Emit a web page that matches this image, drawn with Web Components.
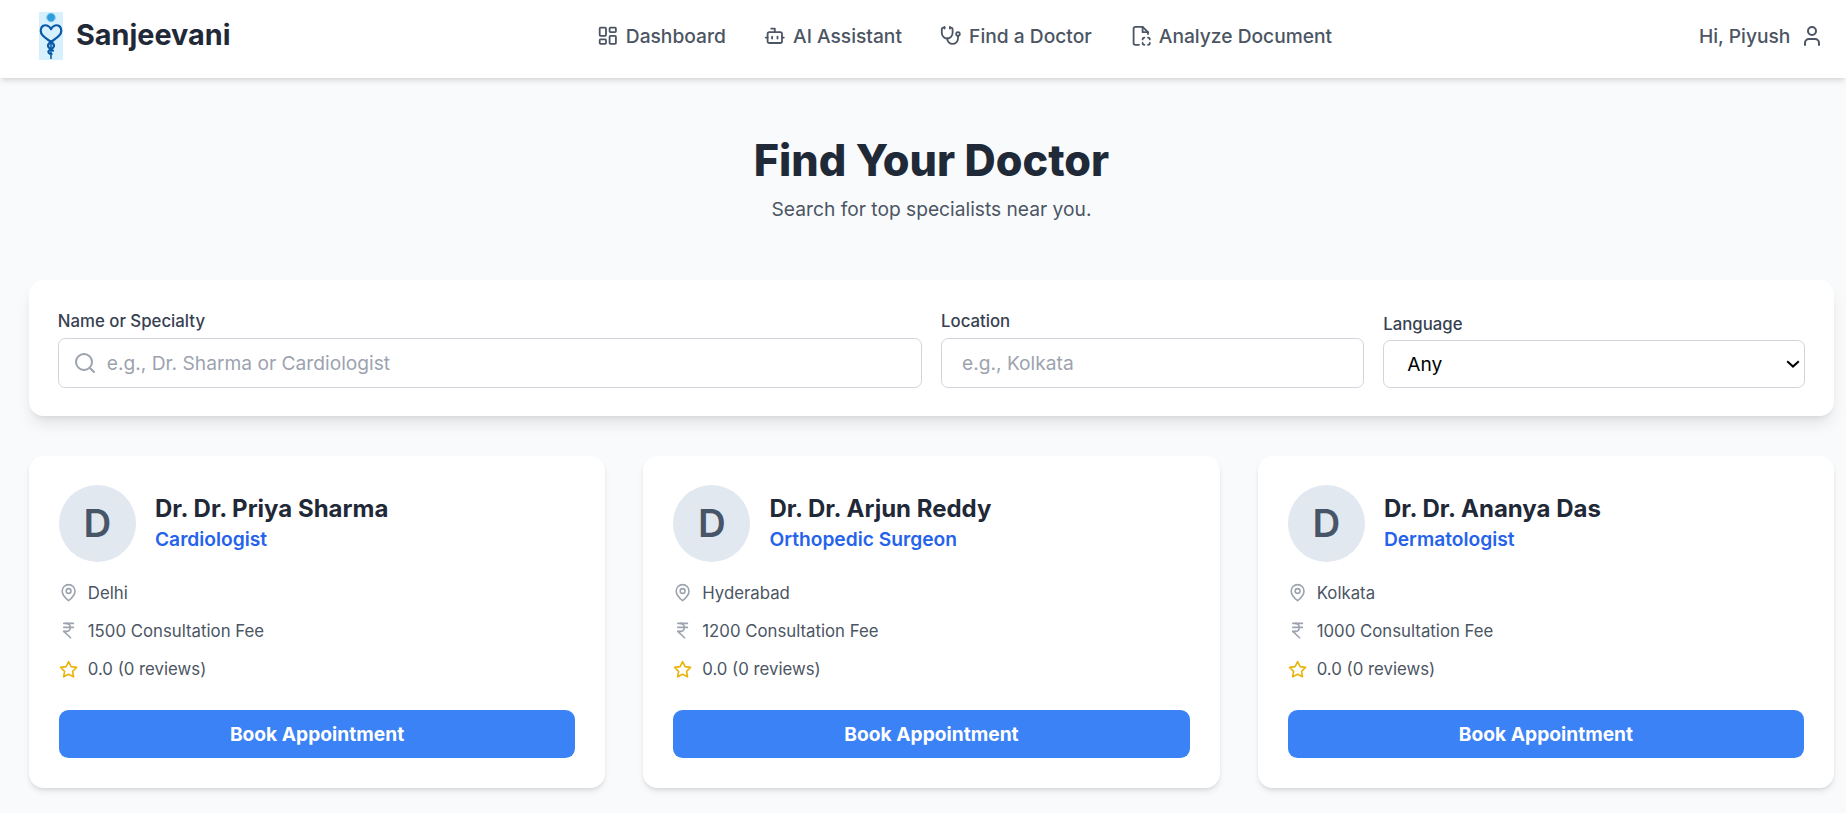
<!DOCTYPE html>
<html lang="en">
<head>
<meta charset="utf-8">
<title>Sanjeevani</title>
<style>
  html, body { margin: 0; padding: 0; background: #f9fafb; overflow: hidden; }
  body { font-family: Inter, "Noto Sans", sans-serif; color: #1f2937; }
</style>
</head>
<body>
<app-shell>
  <top-nav slot="nav"></top-nav>
  <page-heading title="Find Your Doctor" sub="Search for top specialists near you."></page-heading>
  <search-panel></search-panel>
  <card-grid>
    <doctor-card name="Dr. Dr. Priya Sharma" specialty="Cardiologist" city="Delhi" fee="1500"></doctor-card>
    <doctor-card name="Dr. Dr. Arjun Reddy" specialty="Orthopedic Surgeon" city="Hyderabad" fee="1200"></doctor-card>
    <doctor-card name="Dr. Dr. Ananya Das" specialty="Dermatologist" city="Kolkata" fee="1000"></doctor-card>
  </card-grid>
</app-shell>

<script>
  const icon = (inner, size, color, sw) => `<svg width="${size}" height="${size}" viewBox="0 0 24 24" fill="none" stroke="${color}" stroke-width="${sw || 2}" stroke-linecap="round" stroke-linejoin="round" style="display:block;flex:none">${inner}</svg>`;

  const ICONS = {
    dashboard: '<rect width="7" height="9" x="3" y="3" rx="1"/><rect width="7" height="5" x="14" y="3" rx="1"/><rect width="7" height="9" x="14" y="12" rx="1"/><rect width="7" height="5" x="3" y="16" rx="1"/>',
    bot: '<path d="M12 8V4H8"/><rect width="16" height="12" x="4" y="8" rx="2"/><path d="M2 14h2"/><path d="M20 14h2"/><path d="M15 13v2"/><path d="M9 13v2"/>',
    stethoscope: '<path d="M11 2v2"/><path d="M5 2v2"/><path d="M5 3H4a2 2 0 0 0-2 2v4a6 6 0 0 0 12 0V5a2 2 0 0 0-2-2h-1"/><path d="M8 15a6 6 0 0 0 12 0v-3"/><circle cx="20" cy="10" r="2"/>',
    filescan: '<path d="M20 10V8L14 2H6a2 2 0 0 0-2 2v16a2 2 0 0 0 2 2h4"/><path d="M14 2v6h6"/><path d="M16 14a2 2 0 0 0-2 2"/><path d="M20 14a2 2 0 0 1 2 2"/><path d="M20 22a2 2 0 0 0 2-2"/><path d="M16 22a2 2 0 0 1-2-2"/>',
    user: '<path d="M19 21v-2a4 4 0 0 0-4-4H9a4 4 0 0 0-4 4v2"/><circle cx="12" cy="7" r="4"/>',
    search: '<circle cx="11" cy="11" r="8"/><path d="m21 21-4.3-4.3"/>',
    pin: '<path d="M20 10c0 6-8 12-8 12s-8-6-8-12a8 8 0 0 1 16 0Z"/><circle cx="12" cy="10" r="3"/>',
    rupee: '<path d="M6 3h12"/><path d="M6 8h12"/><path d="m6 13 8.5 8"/><path d="M6 13h3"/><path d="M9 13c6.667 0 6.667-10 0-10"/>',
    star: '<polygon points="12 2 15.09 8.26 22 9.27 17 14.14 18.18 21.02 12 17.77 5.82 21.02 7 14.14 2 9.27 8.91 8.26 12 2"/>'
  };

  class AppShell extends HTMLElement {
    constructor() {
      super();
      this.attachShadow({ mode: "open" });
      this.shadowRoot.innerHTML = `
        <style>
          :host { display: block; min-height: 813px; background: #f9fafb; }
          main { padding: 0 12px 0 29px; display: flex; flex-direction: column; }
        </style>
        <slot name="nav"></slot>
        <main><slot></slot></main>
      `;
    }
  }

  class TopNav extends HTMLElement {
    constructor() {
      super();
      this.attachShadow({ mode: "open" });
      const links = [
        ["dashboard", "Dashboard"],
        ["bot", "AI Assistant"],
        ["stethoscope", "Find a Doctor"],
        ["filescan", "Analyze Document"]
      ];
      this.shadowRoot.innerHTML = `
        <style>
          :host { display: block; background: #fff; box-shadow: 0 4px 6px -1px rgba(0,0,0,.1), 0 2px 4px -2px rgba(0,0,0,.1); position: relative; }
          nav { height: 78px; box-sizing: border-box; display: grid; grid-template-columns: 558px auto 1fr; align-items: center; padding: 0 22px 7px 39px; }
          .brand { display: flex; align-items: center; gap: 13px; }
          .brand b { font-size: 28.8px; font-weight: 700; color: #1f2937; line-height: 1; }
          .links { display: flex; gap: 38.4px; }
          a { display: flex; align-items: center; gap: 7.2px; font-size: 19.2px; font-weight: 500; color: #4b5563; text-decoration: none; }
          .me { display: flex; align-items: center; justify-content: flex-end; gap: 9.6px; font-size: 19.2px; font-weight: 500; color: #4b5563; }
        </style>
        <nav>
          <div class="brand">
            <svg width="24" height="48" viewBox="0 0 24 48" style="display:block;flex:none">
              <rect width="24" height="48" fill="#d6f1fd"/>
              <circle cx="12" cy="5.5" r="4.2" fill="#2f9ddc" stroke="#6fc0ea" stroke-width="1"/>
              <path d="M12 17C10 13 6 12.6 3.8 14C1 16 1 20.6 3.8 23.6C7 27 11 28.6 14 31.6C16.6 34.4 13.6 36.6 10 38.6C8.4 40 10 42 12.6 42" fill="none" stroke="#0a5aa8" stroke-width="2.2" stroke-linecap="round"/>
              <path d="M12 17C14 13 18 12.6 20.2 14C23 16 23 20.6 20.2 23.6C17 27 13 28.6 10 31.6C7.4 34.4 10.4 36.6 14 38.6" fill="none" stroke="#0a5aa8" stroke-width="2.2" stroke-linecap="round"/>
              <path d="M12 28V47" stroke="#0a5aa8" stroke-width="1.6"/>
            </svg>
            <b>Sanjeevani</b>
          </div>
          <div class="links">
            ${links.map(([i, t]) => `<a href="#">${icon(ICONS[i], 21.6, "#4b5563")}<span>${t}</span></a>`).join("")}
          </div>
          <div class="me"><span>Hi, Piyush</span>${icon(ICONS.user, 24, "#4b5563")}</div>
        </nav>
      `;
    }
  }

  class PageHeading extends HTMLElement {
    constructor() {
      super();
      this.attachShadow({ mode: "open" });
      this.shadowRoot.innerHTML = `
        <style>
          :host { display: block; text-align: center; padding-top: 54.5px; margin-bottom: 57.5px; }
          h1 { margin: 0; font-size: 43.2px; line-height: 55px; font-weight: 800; color: #1f2937; }
          p { margin: 7px 0 0; font-size: 19.2px; line-height: 28px; color: #4b5563; }
        </style>
        <h1>${this.getAttribute("title")}</h1>
        <p>${this.getAttribute("sub")}</p>
      `;
    }
  }

  class SearchPanel extends HTMLElement {
    constructor() {
      super();
      this.attachShadow({ mode: "open" });
      this.shadowRoot.innerHTML = `
        <style>
          :host { display: block; background: #fff; border-radius: 14.4px; box-shadow: 0 10px 15px -3px rgba(0,0,0,.1), 0 4px 6px -4px rgba(0,0,0,.1); margin-bottom: 40px; }
          .row { height: 136px; box-sizing: border-box; padding: 28.8px 28.8px 0; display: grid; grid-template-columns: 862fr 422fr 421fr; column-gap: 19.2px; align-items: start; }
          label { display: block; font-size: 16.8px; line-height: 24px; font-weight: 500; color: #374151; margin-bottom: 5px; }
          .box { height: 50px; box-sizing: border-box; border: 1px solid #d1d5db; border-radius: 7.2px; display: flex; align-items: center; padding-left: 14px; gap: 10px; background: #fff; }
          .box.plain { padding-left: 20px; }
          input { border: 0; outline: 0; padding: 0; flex: 1; min-width: 0; font: 400 19.2px Inter, sans-serif; color: #1f2937; background: transparent; }
          input::placeholder { color: #9ca3af; opacity: 1; }
          .lang { padding-top: 3px; }
          .lang label { margin-bottom: 4px; }
          .pick { position: relative; }
          .pick svg { position: absolute; right: 5px; top: 20px; pointer-events: none; }
          select { display: block; width: 100%; height: 48px; box-sizing: border-box; border: 1px solid #d1d5db; border-radius: 7.2px; background: #fff; padding: 0 19.2px 0 23px; font: 400 19.2px Inter, sans-serif; color: #000; appearance: none; }
        </style>
        <div class="row">
          <div>
            <label>Name or Specialty</label>
            <div class="box">${icon(ICONS.search, 24, "#9ca3af")}<input placeholder="e.g., Dr. Sharma or Cardiologist"></div>
          </div>
          <div>
            <label>Location</label>
            <div class="box plain"><input placeholder="e.g., Kolkata"></div>
          </div>
          <div class="lang">
            <label>Language</label>
            <div class="pick">
              <select><option>Any</option></select>
              <svg width="14" height="8" viewBox="0 0 14 8" fill="none" stroke="#000" stroke-width="2"><path d="M1.2 1.2 7 6.6 12.8 1.2"/></svg>
            </div>
          </div>
        </div>
      `;
    }
  }

  class CardGrid extends HTMLElement {
    constructor() {
      super();
      this.attachShadow({ mode: "open" });
      this.shadowRoot.innerHTML = `
        <style>
          :host { display: grid; grid-template-columns: repeat(3, 1fr); column-gap: 38.4px; }
        </style>
        <slot></slot>
      `;
    }
  }

  class DoctorCard extends HTMLElement {
    constructor() {
      super();
      this.attachShadow({ mode: "open" });
      const name = this.getAttribute("name");
      this.shadowRoot.innerHTML = `
        <style>
          :host { display: block; background: #fff; border-radius: 14.4px; box-shadow: 0 4px 6px -1px rgba(0,0,0,.1), 0 2px 4px -2px rgba(0,0,0,.1); padding: 28.8px 30px 30px; box-sizing: border-box; }
          .head { display: flex; align-items: center; gap: 19.2px; }
          .avatar { width: 76.8px; height: 76.8px; border-radius: 50%; background: #e2e8f0; color: #475569; font-size: 38.4px; font-weight: 600; display: flex; align-items: center; justify-content: center; flex: none; }
          .who { padding-bottom: 2px; }
          h3 { margin: 0; font-size: 24px; line-height: 33px; font-weight: 700; color: #1f2937; }
          .spec { font-size: 19.2px; line-height: 28px; font-weight: 600; color: #2563eb; }
          ul { list-style: none; margin: 19px 0 0; padding: 0; display: flex; flex-direction: column; gap: 14.4px; }
          li { display: flex; align-items: center; gap: 9.6px; font-size: 16.8px; line-height: 24px; color: #4b5563; height: 24px; }
          button { display: block; width: 100%; height: 48px; margin-top: 29px; border: 0; border-radius: 9.6px; background: #3b82f6; color: #fff; font: 700 19.2px Inter, sans-serif; }
        </style>
        <div class="head">
          <div class="avatar">${name.replace("Dr. ", "").charAt(0)}</div>
          <div class="who">
            <h3>${name}</h3>
            <div class="spec">${this.getAttribute("specialty")}</div>
          </div>
        </div>
        <ul>
          <li>${icon(ICONS.pin, 19.2, "#9ca3af")}<span>${this.getAttribute("city")}</span></li>
          <li>${icon(ICONS.rupee, 19.2, "#9ca3af")}<span>${this.getAttribute("fee")} Consultation Fee</span></li>
          <li>${icon(ICONS.star, 19.2, "#eab308")}<span>0.0 (0 reviews)</span></li>
        </ul>
        <button type="button">Book Appointment</button>
      `;
    }
  }

  customElements.define("app-shell", AppShell);
  customElements.define("top-nav", TopNav);
  customElements.define("page-heading", PageHeading);
  customElements.define("search-panel", SearchPanel);
  customElements.define("card-grid", CardGrid);
  customElements.define("doctor-card", DoctorCard);
</script>
</body>
</html>
